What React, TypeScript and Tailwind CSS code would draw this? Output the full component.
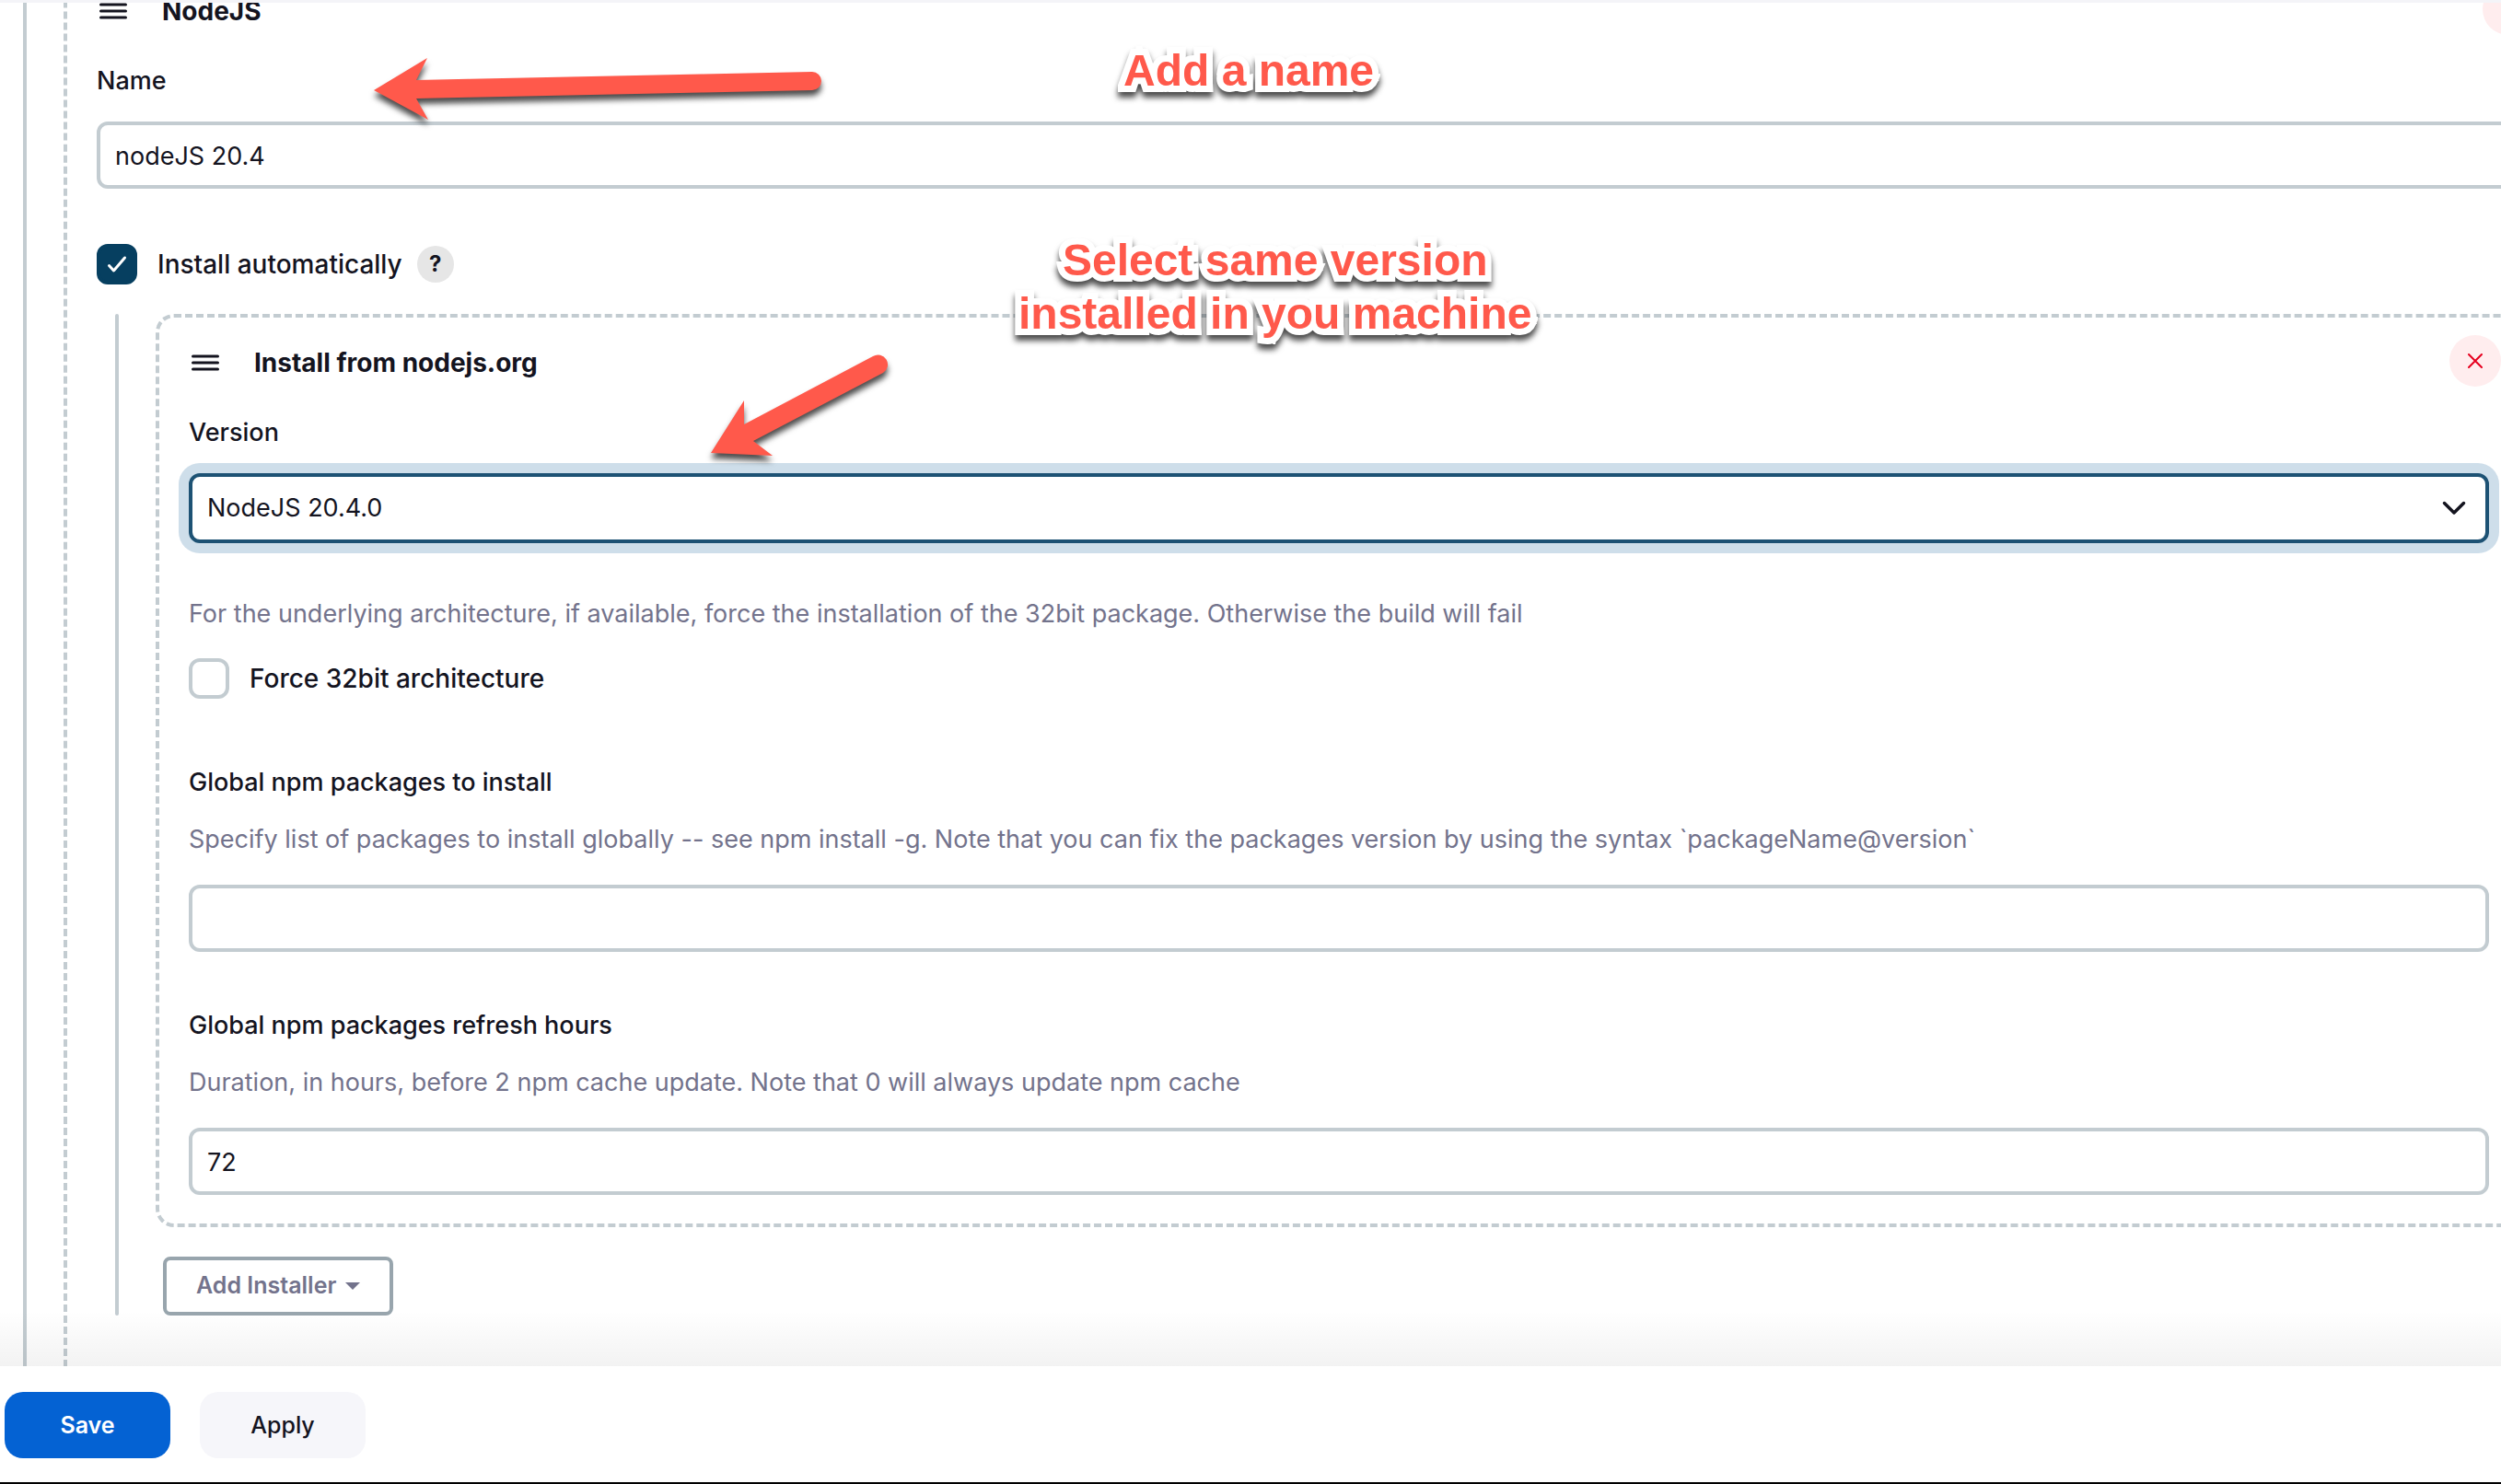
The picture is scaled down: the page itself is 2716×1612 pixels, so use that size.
import React, { useState } from "react";

const arrowShadow = "drop-shadow-[0_6px_3px_rgba(0,0,0,0.7)]";

function DragHandle() {
  return (
    <svg viewBox="0 0 30 18" className="h-[18px] w-[30px] shrink-0" aria-hidden="true">
      <path d="M1.5 2h27M1.5 9h27M1.5 16h27" stroke="#14141f" strokeWidth="3" strokeLinecap="round" />
    </svg>
  );
}

function SectionHeader({ title }: { title: string }) {
  return (
    <div className="-mr-[13px] flex h-[60px] items-center pl-[3px]">
      <DragHandle />
      <h2 className="ml-[38px] flex-1 text-[28px] leading-10 font-bold">{title}</h2>
      <button
        type="button"
        aria-label={`Delete ${title}`}
        className="flex size-14 items-center justify-center self-start rounded-full bg-[#ffedee]"
      >
        <svg viewBox="0 0 16 16" className="size-4" aria-hidden="true">
          <path d="M1 1l14 14M15 1L1 15" stroke="#e6001f" strokeWidth="2" strokeLinecap="round" />
        </svg>
      </button>
    </div>
  );
}

function Checkbox({ id, label, initial }: { id: string; label: string; initial: boolean }) {
  const [checked, setChecked] = useState(initial);
  return (
    <div className="flex items-center">
      <span className="relative flex size-11">
        <input
          id={id}
          type="checkbox"
          checked={checked}
          onChange={(e) => setChecked(e.target.checked)}
          className="size-11 appearance-none rounded-xl border-4 border-[#c3ccd1] bg-white checked:border-[#063f60] checked:bg-[#063f60]"
        />
        {checked && (
          <svg viewBox="0 0 44 44" className="pointer-events-none absolute inset-0 size-11" fill="none" aria-hidden="true">
            <path d="M13.500 23.500l5 5.500 12-14" stroke="#fff" strokeWidth="3" strokeLinecap="round" strokeLinejoin="round" />
          </svg>
        )}
      </span>
      <label htmlFor={id} className="ml-[22px] text-[28px] leading-10 font-medium">
        {label}
      </label>
    </div>
  );
}

function TextField({ id, label, help, initial }: { id: string; label: string; help?: string; initial: string }) {
  return (
    <div className="flex flex-col">
      <label htmlFor={id} className="text-[27px] leading-10 font-medium">
        {label}
      </label>
      {help && (
        <p id={`${id}-help`} className="mt-[22px] mb-[5px] text-[27px] leading-10 text-[#73738c]">
          {help}
        </p>
      )}
      <input
        id={id}
        type="text"
        defaultValue={initial}
        aria-describedby={help ? `${id}-help` : undefined}
        className="mt-6 h-[73px] rounded-xl border-4 border-[#c3ccd1] bg-white px-4 pt-px text-[27px] outline-none"
      />
    </div>
  );
}

function Callout({ children, className }: { children: React.ReactNode; className: string }) {
  return (
    <p
      className={`absolute text-center font-['Liberation_Sans',Arial,sans-serif] text-5xl leading-[58px] font-bold whitespace-pre text-[#ff594b] [-webkit-text-stroke:14px_#fff] [paint-order:stroke_fill] [stroke-linejoin:round] drop-shadow-[0_6px_3px_rgba(0,0,0,0.7)] ${className}`}
    >
      {children}
    </p>
  );
}

function Annotations() {
  return (
    <div className="pointer-events-none absolute inset-0">
      <svg viewBox="0 0 490 72" className={`absolute top-[57px] left-[404px] h-[72px] w-[490px] overflow-visible ${arrowShadow}`} aria-hidden="true">
        <path d="M2 38L60 3L48 27L478 18A10 10 0 0 1 478 38L48 47L61 70Z" fill="#ff594b" />
      </svg>
      <svg viewBox="0 0 194 112" className={`absolute top-[382px] left-[771px] h-[112px] w-[194px] overflow-visible ${arrowShadow}`} aria-hidden="true">
        <path d="M1 107L37 50L37 76L177 2A10 10 0 0 1 188 20L47 94L68 110Z" fill="#ff594b" />
      </svg>
      <Callout className="top-[45px] left-[1220px]">Add a name</Callout>
      <Callout className="top-[251px] left-[1106px]">{"Select same version\ninstalled in you machine"}</Callout>
    </div>
  );
}

export default function App() {
  return (
    <div className="flex h-screen flex-col overflow-hidden bg-white font-[Inter,'Liberation_Sans',sans-serif] text-[#14141f]">
      <main className="relative flex-1 overflow-hidden border-t-[3px] border-[#f4f4f8]">
        <div className="-mt-[61px] -mr-[59px] ml-[25px] border-l-4 border-[#c3ccd1] pl-10">
          <section className="min-h-[1600px] rounded-2xl border-4 border-dashed border-[#c3ccd1] px-8 pt-9">
            <SectionHeader title="NodeJS" />
            <div className="mt-[26px]">
              <TextField id="name" label="Name" initial="nodeJS 20.4" />
            </div>

            <div className="mt-[60px] flex items-center">
              <Checkbox id="auto-install" label="Install automatically" initial />
              <button
                type="button"
                aria-label="Help for Install automatically"
                className="ml-4 size-10 rounded-full bg-[#e6e6e6] text-2xl leading-10 font-bold"
              >
                ?
              </button>
            </div>

            <div className="mt-8 flex">
              <div className="ml-5 w-1 rounded-full bg-[#c3ccd1]" />
              <div className="ml-10 flex-1">
                <section className="rounded-[20px] border-4 border-dashed border-[#c3ccd1] px-8 pt-[19px] pb-[31px]">
                  <SectionHeader title="Install from nodejs.org" />
                  <div className="mt-[26px] flex flex-col">
                    <label htmlFor="version" className="text-[27px] leading-10 font-medium">
                      Version
                    </label>
                    <div className="relative mt-6 flex">
                      <select
                        id="version"
                        defaultValue="20.4.0"
                        className="h-[76px] w-full appearance-none rounded-xl border-4 border-[#1d5274] bg-white px-4 pt-px text-[27px] shadow-[0_0_0_11px_#cedeea] outline-none"
                      >
                        <option value="20.4.0">NodeJS 20.4.0</option>
                        <option value="20.3.1">NodeJS 20.3.1</option>
                      </select>
                      <svg viewBox="0 0 26 16" className="pointer-events-none absolute top-[30px] right-[25px] h-4 w-[26px]" fill="none" aria-hidden="true">
                        <path d="M2.500 2.500L13 13L23.500 2.500" stroke="#14141f" strokeWidth="3.500" strokeLinecap="round" strokeLinejoin="round" />
                      </svg>
                    </div>
                  </div>

                  <p className="mt-[57px] mb-7 text-[27px] leading-10 text-[#73738c]">
                    For the underlying architecture, if available, force the installation of the 32bit package. Otherwise the build will fail
                  </p>
                  <Checkbox id="force-32" label="Force 32bit architecture" initial={false} />

                  <div className="mt-[71px]">
                    <TextField
                      id="packages"
                      label="Global npm packages to install"
                      help="Specify list of packages to install globally -- see npm install -g. Note that you can fix the packages version by using the syntax `packageName@version`"
                      initial=""
                    />
                  </div>
                  <div className="mt-[60px]">
                    <TextField
                      id="refresh"
                      label="Global npm packages refresh hours"
                      help="Duration, in hours, before 2 npm cache update. Note that 0 will always update npm cache"
                      initial="72"
                    />
                  </div>
                </section>

                <button
                  type="button"
                  className="mt-8 ml-2 flex h-16 items-center gap-[10px] rounded-lg border-4 border-[#98a5ad] bg-white px-8 text-[25px] font-semibold text-[#73738c]"
                >
                  Add Installer
                  <svg viewBox="0 0 16 8" className="h-2 w-4" aria-hidden="true">
                    <path d="M0 0h16L8 8z" fill="#73738c" />
                  </svg>
                </button>
              </div>
            </div>
          </section>
        </div>
        <div className="pointer-events-none absolute inset-x-0 bottom-0 h-[60px] bg-linear-to-b from-black/0 to-black/5" />
        <Annotations />
      </main>

      <footer className="flex gap-8 border-b-2 border-black bg-white px-[5px] pt-7 pb-[26px]">
        <button type="submit" className="h-[72px] w-[180px] rounded-[20px] bg-[#0462d3] pt-0.5 text-[25px] font-semibold text-white">
          Save
        </button>
        <button type="button" className="h-[72px] w-[180px] rounded-[20px] bg-[#f6f6fa] pt-0.5 text-[25px] font-medium">
          Apply
        </button>
      </footer>
    </div>
  );
}
